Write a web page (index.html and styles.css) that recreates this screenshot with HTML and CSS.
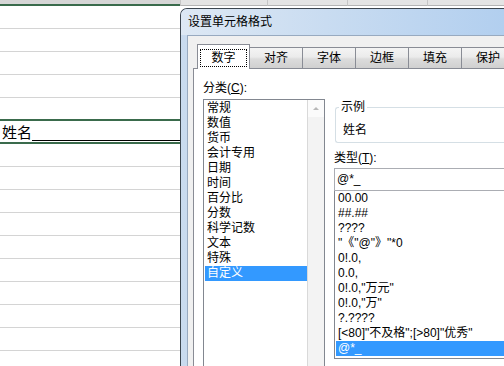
FILE: index.html
```html
<!DOCTYPE html>
<html lang="zh-CN">
<head>
    <meta charset="UTF-8">
    <title>设置单元格格式</title>
    <link rel="stylesheet" href="styles.css">
</head>
<body>
    <div class="sheet">
        <div class="col-header">
            <div class="hcell hcell-a"></div>
            <div class="hcell hcell-b"></div>
            <div class="hcell hcell-c"></div>
            <div class="hcell hcell-d"></div>
            <div class="hcell hcell-e"></div>
        </div>
        <div class="row"></div>
        <div class="row"></div>
        <div class="row"></div>
        <div class="row"></div>
        <div class="row row-above"></div>
        <div class="row row-active">
            <span class="cell-text">姓名</span>
            <span class="cell-fill"></span>
        </div>
        <div class="row"></div>
        <div class="row"></div>
        <div class="row"></div>
        <div class="row"></div>
        <div class="row"></div>
        <div class="row"></div>
        <div class="row"></div>
        <div class="row"></div>
        <div class="row"></div>
    </div>

    <div class="dialog">
        <div class="titlebar">设置单元格格式</div>
        <div class="client">
            <div class="tabs">
                <div class="tab tab-active"><span class="focus">数字</span></div>
                <div class="tab">对齐</div>
                <div class="tab">字体</div>
                <div class="tab">边框</div>
                <div class="tab">填充</div>
                <div class="tab tab-last">保护</div>
            </div>
            <div class="page">
                <div class="left-col">
                    <div class="label">分类(<u>C</u>):</div>
                    <div class="cat-box">
                        <ul class="cat-list">
                            <li>常规</li>
                            <li>数值</li>
                            <li>货币</li>
                            <li>会计专用</li>
                            <li>日期</li>
                            <li>时间</li>
                            <li>百分比</li>
                            <li>分数</li>
                            <li>科学记数</li>
                            <li>文本</li>
                            <li>特殊</li>
                            <li class="selected">自定义</li>
                        </ul>
                        <div class="scrollbar">
                            <div class="scroll-btn"><span class="arrow-up"></span></div>
                        </div>
                    </div>
                </div>
                <div class="right-col">
                    <fieldset class="sample">
                        <legend>示例</legend>
                        <div class="sample-text">姓名</div>
                    </fieldset>
                    <div class="label type-label">类型(<u>T</u>):</div>
                    <div class="type-input">@*_</div>
                    <ul class="type-list">
                        <li>00.00</li>
                        <li>##.##</li>
                        <li>????</li>
                        <li>"《"@"》"*0</li>
                        <li>0!.0,</li>
                        <li>0.0,</li>
                        <li>0!.0,"万元"</li>
                        <li>0!.0,"万"</li>
                        <li>?.????</li>
                        <li>[&lt;80]"不及格";[&gt;80]"优秀"</li>
                        <li class="selected">@*_</li>
                    </ul>
                </div>
            </div>
        </div>
    </div>
</body>
</html>
```

FILE: styles.css
```css
body {
    margin: 0;
    width: 504px;
    height: 366px;
    overflow: hidden;
    position: relative;
    background-color: white;
    font-family: "Liberation Sans", "Noto Sans CJK SC", sans-serif;
    font-size: 12px;
    color: #000;
}

/* spreadsheet behind the dialog */
.col-header {
    display: flex;
    height: 6px;
}
.hcell {
    height: 5px;
    background-color: #e4e4e4;
    border-bottom: 1px solid #b4b4b4;
    border-left: 1px solid #c6c6c6;
}
.hcell-a {
    width: 180px;
    height: 4px;
    border-left: none;
    background-color: #d6d6d6;
    border-bottom: 2px solid #3a6b4c;
}
.hcell-b {
    width: 86px;
}
.hcell-c,
.hcell-d {
    width: 79px;
}
.hcell-e {
    flex: 1;
}
.row {
    height: 22px;
    border-bottom: 1px solid #d4d4d4;
}
.row-above {
    height: 21px;
    border-bottom: 2px solid #3a6b4c;
}
.row-active {
    height: 21px;
    border-bottom: 2px solid #3a6b4c;
    display: flex;
    align-items: flex-end;
    width: 180px;
}
.cell-text {
    font-size: 15px;
    line-height: 19px;
    padding-left: 2px;
}
.cell-fill {
    flex: 1;
    border-bottom: 1px solid #000;
    margin-bottom: 1px;
}

/* dialog window, clipped by the right and bottom edges */
.dialog {
    position: absolute;
    left: 180px;
    top: 8px;
    right: 0;
    bottom: 0;
    display: flex;
    flex-direction: column;
    border: 1px solid #3c4650;
    border-right: none;
    border-bottom: none;
    border-radius: 7px 0 0 0;
    background: linear-gradient(to right, #c9dbef, #bcd3ee 40%, #a9c8ec);
    overflow: hidden;
}
.titlebar {
    flex-shrink: 0;
    height: 26px;
    line-height: 26px;
    padding-left: 7px;
    background: linear-gradient(to right, #dde8f4, #c9dcf1 45%, #b2cfef);
    white-space: nowrap;
}
.client {
    flex: 1;
    min-height: 0;
    display: flex;
    flex-direction: column;
    margin-left: 6px;
    background-color: #f0f0f0;
    border-top: 1px solid #98aac0;
    border-left: 1px solid #98aac0;
    padding-left: 5px;
}
.tabs {
    flex-shrink: 0;
    display: flex;
    align-items: flex-end;
    height: 24px;
    margin-top: 8px;
    padding-left: 4px;
}
.tab {
    box-sizing: border-box;
    width: 54px;
    height: 21px;
    margin-left: -1px;
    line-height: 20px;
    text-align: center;
    border: 1px solid #898c95;
    border-bottom: none;
    background: linear-gradient(#f4f4f4, #ebebeb 45%, #dcdcdc 55%, #d0d0d0);
    white-space: nowrap;
}
.tab-last {
    width: 43px;
    border-right: none;
    text-align: left;
    padding-left: 14px;
}
.tab-active {
    width: 53px;
    height: 25px;
    margin-left: 0;
    margin-bottom: -1px;
    background: white;
    position: relative;
    z-index: 1;
}
.focus {
    display: block;
    box-sizing: border-box;
    height: 18px;
    margin: 4px 2px 0;
    line-height: 16px;
    border: 1px dotted #000;
}
.page {
    flex: 1;
    min-height: 0;
    display: flex;
    background-color: white;
    border-top: 1px solid #898c95;
    border-left: 1px solid #898c95;
    padding: 12px 0 0 9px;
}
.label {
    line-height: 15px;
    white-space: nowrap;
}
.left-col {
    width: 122px;
    flex-shrink: 0;
    display: flex;
    flex-direction: column;
}
.left-col .label {
    margin-bottom: 3px;
}
.cat-box {
    flex: 1;
    display: flex;
    border: 1px solid #828790;
    border-bottom: none;
}
.cat-list {
    list-style: none;
    margin: 0;
    padding: 1px 0 0 1px;
    flex: 1;
}
.cat-list li,
.type-list li {
    height: 15px;
    line-height: 15px;
    padding-left: 2px;
    white-space: nowrap;
}
.selected {
    background-color: #3399ff;
    color: white;
}
.scrollbar {
    width: 16px;
    background-color: #f3f3f3;
    border-left: 1px solid #d9d9d9;
}
.scroll-btn {
    height: 17px;
    background-color: #fbfbfb;
    display: flex;
    justify-content: center;
    align-items: center;
}
.arrow-up {
    width: 0;
    height: 0;
    border-left: 3px solid transparent;
    border-right: 3px solid transparent;
    border-bottom: 3px solid #b8b8b8;
}
.right-col {
    flex: 1;
    min-width: 0;
    margin-left: 9px;
}
.sample {
    margin: 19px 0 0 1px;
    padding: 8px 7px 4px;
    border: 1px solid #d5dfe5;
    border-right: none;
    border-radius: 3px 0 0 3px;
}
.sample legend {
    margin-left: -4px;
    padding: 0 2px;
    line-height: 15px;
}
.sample-text {
    line-height: 15px;
}
.type-label {
    margin-top: 8px;
}
.type-input {
    box-sizing: border-box;
    height: 23px;
    margin-top: 2px;
    line-height: 21px;
    padding-left: 2px;
    border: 1px solid #abadb3;
    border-right: none;
}
.type-list {
    list-style: none;
    margin: 0;
    padding: 0 0 2px 1px;
    border: 1px solid #828790;
    border-top: none;
    border-right: none;
}
```
